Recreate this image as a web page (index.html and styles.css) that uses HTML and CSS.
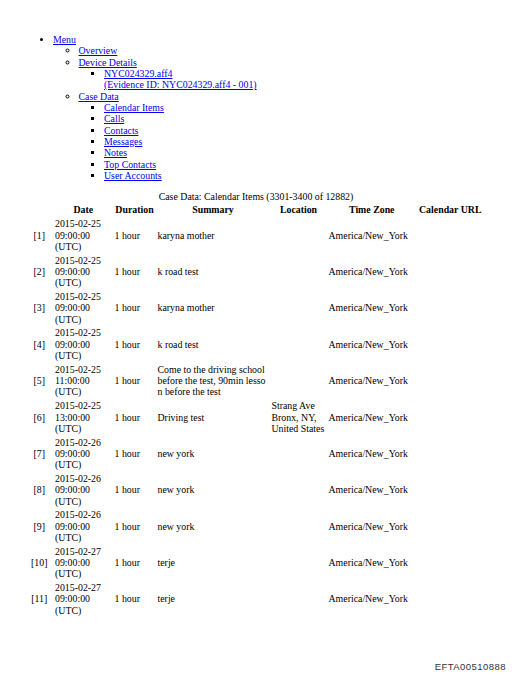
FILE: index.html
```html
<!DOCTYPE html>
<html>
<head>
<meta charset="utf-8">
<link rel="stylesheet" href="styles.css">
</head>
<body>
<ul class="menu">
  <li><a href="#">Menu</a>
    <ul>
      <li><a href="#">Overview</a></li>
      <li><a href="#">Device Details</a>
        <ul>
          <li><a href="#">NYC024329.aff4<br>(Evidence ID: NYC024329.aff4 - 001)</a></li>
        </ul>
      </li>
      <li><a href="#">Case Data</a>
        <ul>
          <li><a href="#">Calendar Items</a></li>
          <li><a href="#">Calls</a></li>
          <li><a href="#">Contacts</a></li>
          <li><a href="#">Messages</a></li>
          <li><a href="#">Notes</a></li>
          <li><a href="#">Top Contacts</a></li>
          <li><a href="#">User Accounts</a></li>
        </ul>
      </li>
    </ul>
  </li>
</ul>
<table class="items">
  <caption>Case Data: Calendar Items (3301-3400 of 12882)</caption>
  <colgroup>
    <col class="c-idx"><col class="c-date"><col class="c-dur"><col class="c-sum"><col class="c-loc"><col class="c-tz"><col class="c-url">
  </colgroup>
  <thead>
    <tr><th></th><th>Date</th><th>Duration</th><th>Summary</th><th>Location</th><th>Time Zone</th><th>Calendar URL</th></tr>
  </thead>
  <tbody>
    <tr><td class="idx">[1]</td><td>2015-02-25 09:00:00 (UTC)</td><td>1 hour</td><td class="sum">karyna mother</td><td></td><td>America/New_York</td><td></td></tr>
    <tr><td class="idx">[2]</td><td>2015-02-25 09:00:00 (UTC)</td><td>1 hour</td><td class="sum">k road test</td><td></td><td>America/New_York</td><td></td></tr>
    <tr><td class="idx">[3]</td><td>2015-02-25 09:00:00 (UTC)</td><td>1 hour</td><td class="sum">karyna mother</td><td></td><td>America/New_York</td><td></td></tr>
    <tr><td class="idx">[4]</td><td>2015-02-25 09:00:00 (UTC)</td><td>1 hour</td><td class="sum">k road test</td><td></td><td>America/New_York</td><td></td></tr>
    <tr><td class="idx">[5]</td><td>2015-02-25 11:00:00 (UTC)</td><td>1 hour</td><td class="sum">Come to the driving school before the test, 90min lesson before the test</td><td></td><td>America/New_York</td><td></td></tr>
    <tr><td class="idx">[6]</td><td>2015-02-25 13:00:00 (UTC)</td><td>1 hour</td><td class="sum">Driving test</td><td>Strang Ave Bronx, NY, United States</td><td>America/New_York</td><td></td></tr>
    <tr><td class="idx">[7]</td><td>2015-02-26 09:00:00 (UTC)</td><td>1 hour</td><td class="sum">new york</td><td></td><td>America/New_York</td><td></td></tr>
    <tr><td class="idx">[8]</td><td>2015-02-26 09:00:00 (UTC)</td><td>1 hour</td><td class="sum">new york</td><td></td><td>America/New_York</td><td></td></tr>
    <tr><td class="idx">[9]</td><td>2015-02-26 09:00:00 (UTC)</td><td>1 hour</td><td class="sum">new york</td><td></td><td>America/New_York</td><td></td></tr>
    <tr><td class="idx">[10]</td><td>2015-02-27 09:00:00 (UTC)</td><td>1 hour</td><td class="sum">terje</td><td></td><td>America/New_York</td><td></td></tr>
    <tr><td class="idx">[11]</td><td>2015-02-27 09:00:00 (UTC)</td><td>1 hour</td><td class="sum">terje</td><td></td><td>America/New_York</td><td></td></tr>
  </tbody>
</table>
<div class="stamp">EFTA00510888</div>
</body>
</html>
```
FILE: styles.css
```css
html, body {
  margin: 0;
  padding: 0;
  background: #fff;
}
body {
  position: relative;
  width: 512px;
  height: 678px;
  font-family: "Liberation Serif", "Times New Roman", serif;
  font-size: 9.86px;
  line-height: 11.33px;
  color: #000;
}
a {
  color: #0000ee;
  text-decoration: underline;
}
.menu {
  margin: 34px 0 9.5px 0;
  padding-left: 53px;
}
.menu ul {
  margin: 0;
  padding-left: 25.5px;
}
.items {
  table-layout: fixed;
  border-collapse: separate;
  border-spacing: 0 1.2px;
  margin: 0 auto;
  width: 459px;
}
.items caption {
  text-align: center;
}
.items th, .items td {
  padding: 0.7px 3px 0.7px 0;
  vertical-align: middle;
  text-align: left;
}
.items th {
  font-weight: bold;
  text-align: center;
  padding-bottom: 1.6px;
}
.c-idx { width: 28.5px; }
.c-date { width: 59.5px; }
.c-dur { width: 43px; }
.c-sum { width: 114px; }
.c-loc { width: 57px; }
.c-tz { width: 89.5px; }
.c-url { width: 67.5px; }
.items td.idx {
  text-align: center;
}
.items td.sum {
  word-break: break-all;
}
.stamp {
  position: absolute;
  right: 6px;
  top: 661px;
  font-family: "Liberation Sans", Arial, sans-serif;
  font-size: 9.5px;
  line-height: 12px;
  letter-spacing: 0.45px;
  color: #333;
}
```
